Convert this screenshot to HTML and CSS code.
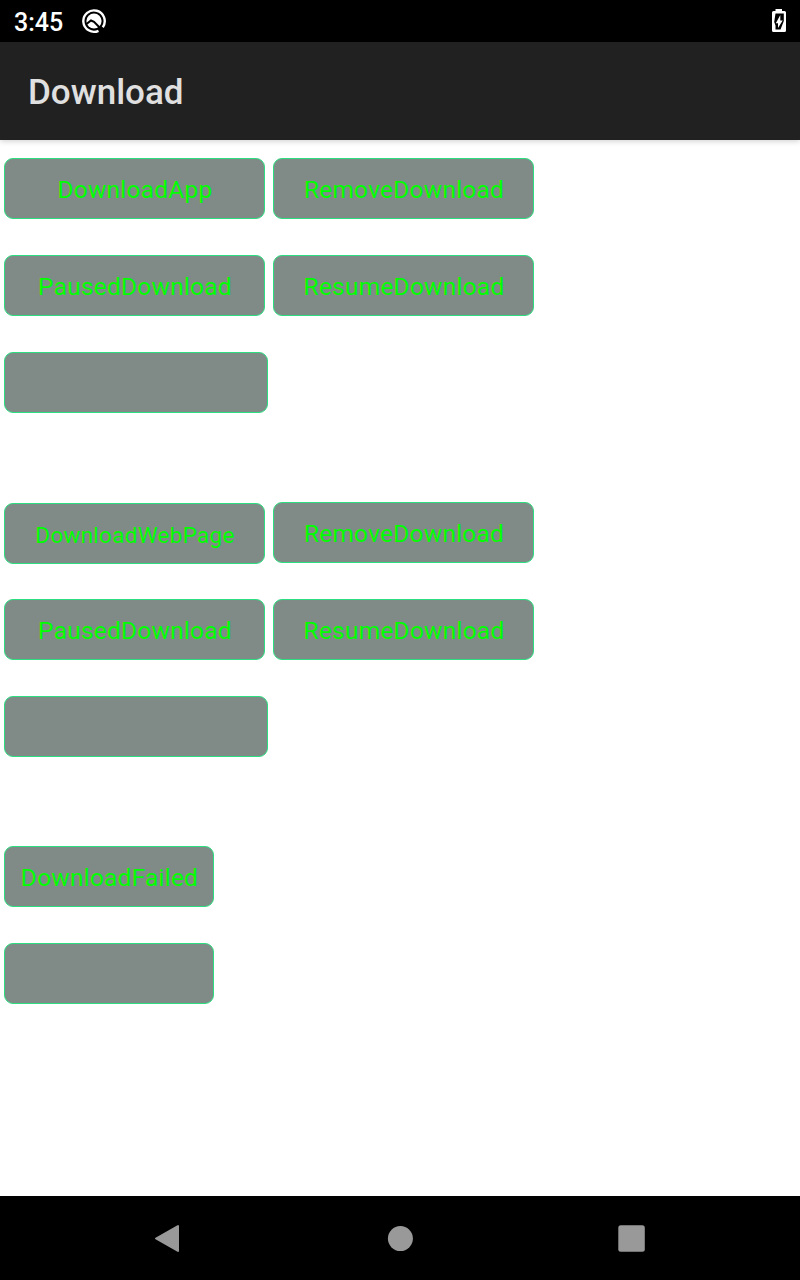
FILE: index.html
```html
<!DOCTYPE html>
<html lang="en">
<head>
<meta charset="utf-8">
<title>Download</title>
<link rel="stylesheet" href="styles.css">
</head>
<body>
<div class="status">
  <span class="clock">3:45</span>
  <svg class="q-icon" width="26" height="26" viewBox="0 0 26 26">
    <path d="M17.500 22.800A10.700 10.700 0 1 1 21.800 19.200" fill="none" stroke="#fff" stroke-width="2.400"/>
    <circle cx="13" cy="13" r="7.600" fill="#fff"/>
    <path d="M5.500 16l4.500-3.500 3 1.300 9.300 9.500" fill="none" stroke="#000" stroke-width="2"/>
  </svg>
  <svg class="battery" width="14" height="24" viewBox="0 0 14 24">
    <path d="M3.500 0h6.500v2h2.500Q14 2 14 3.500V21.500Q14 23 12.500 23H1.500Q0 23 0 21.500V3.500Q0 2 1.500 2h2z" fill="#fff"/>
    <path d="M3.500 4.500h8.300v7.500L8.500 20.500H3.500v-4L2.200 13z" fill="#000"/>
    <path d="M8.300 6v5.500h2.400L6 19v-4.800H3.800z" fill="#fff"/>
  </svg>
</div>
<header class="appbar"><h1 class="title">Download</h1></header>
<main class="content">
  <div class="row"><button class="btn">DownloadApp</button><button class="btn">RemoveDownload</button></div>
  <div class="row"><button class="btn">PausedDownload</button><button class="btn">ResumeDownload</button></div>
  <div class="row last"><div class="btn wide"></div></div>
  <div class="row web"><button class="btn small">DownloadWebPage</button><button class="btn">RemoveDownload</button></div>
  <div class="row"><button class="btn">PausedDownload</button><button class="btn">ResumeDownload</button></div>
  <div class="row last"><div class="btn wide"></div></div>
  <div class="row"><button class="btn short">DownloadFailed</button></div>
  <div class="row"><div class="btn short"></div></div>
</main>
<nav class="nav">
  <svg width="28" height="30" viewBox="0 0 28 30"><path d="M2 14.500 24 2v25z" fill="#999" stroke="#999" stroke-width="2" stroke-linejoin="round"/></svg>
  <svg width="26" height="26" viewBox="0 0 26 26"><circle cx="13.400" cy="12.600" r="12.500" fill="#999"/></svg>
  <svg width="28" height="28" viewBox="0 0 28 28"><rect x=".3" y=".3" width="26.500" height="26.500" rx="2.500" fill="#999"/></svg>
</nav>
</body>
</html>
```
FILE: styles.css
```css
* { box-sizing: border-box; }
body {
  margin: 0;
  width: 800px;
  height: 1280px;
  display: flex;
  flex-direction: column;
  background: #fff;
  font-family: Roboto, sans-serif;
  overflow: hidden;
}
svg { display: block; }
.status {
  height: 42px;
  padding: 0 14px;
  display: flex;
  align-items: flex-start;
  background: #000;
  color: #fff;
}
.clock {
  width: 67px;
  padding-top: 8px;
  font-size: 25px;
  line-height: 29px;
  font-weight: 500;
}
.q-icon { margin-top: 8px; }
.battery { margin: 9px 0 0 auto; }
.appbar {
  height: 98px;
  padding: 3px 28px 0;
  display: flex;
  align-items: center;
  background: #212121;
  box-shadow: 0 1px 6px rgba(0, 0, 0, .2);
}
.title {
  margin: 0;
  font-size: 35px;
  font-weight: 500;
  color: #e0e0e0;
}
.content { flex: 1; padding: 18px 4px 0; }
.row {
  display: flex;
  gap: 8px;
  height: 61px;
  margin-bottom: 36px;
}
.row.last { margin-bottom: 89px; }
.web .small { margin-top: 1px; }
.btn {
  width: 261px;
  height: 61px;
  padding: 2px 0 0 1px;
  border: 1px solid #2cde80;
  border-radius: 9px;
  background: #808a86;
  color: #0f0;
  font: 24.5px Roboto, sans-serif;
  letter-spacing: .22px;
  text-align: center;
}
.small { font-size: 22.5px; padding-top: 2px; letter-spacing: .27px; }
.wide { width: 264px; }
.short { width: 210px; }
.nav {
  height: 84px;
  padding: 1px 154px 0;
  display: flex;
  justify-content: space-between;
  align-items: center;
  background: #000;
}
```
